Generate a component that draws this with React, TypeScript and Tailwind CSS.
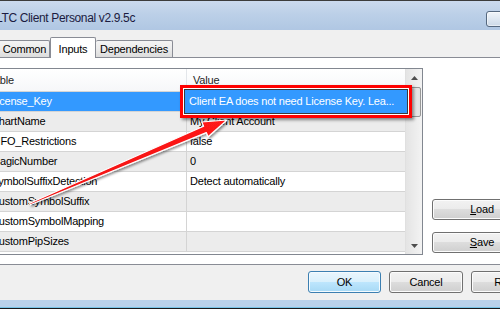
import React from "react";

type Row = { name: string; value: string; selected?: boolean };

const rows: Row[] = [
  { name: "License_Key", value: "", selected: true },
  { name: "ChartName", value: "My Client Account" },
  { name: "FIFO_Restrictions", value: "false" },
  { name: "MagicNumber", value: "0" },
  { name: "SymbolSuffixDetection", value: "Detect automatically" },
  { name: "CustomSymbolSuffix", value: "" },
  { name: "CustomSymbolMapping", value: "" },
  { name: "CustomPipSizes", value: "" },
];

function VistaButton({
  children,
  className = "",
  focused = false,
}: {
  children: React.ReactNode;
  className?: string;
  focused?: boolean;
}) {
  return (
    <div
      className={
        "flex items-center justify-center rounded-[3px] border " +
        (focused
          ? "border-[#3c7fb1] bg-[linear-gradient(to_bottom,#eaf6fd_0%,#d9f0fc_50%,#bee6fd_50%,#a7d9f5_100%)] shadow-[inset_0_0_0_1px_#f4fbff]"
          : "border-[#707070] bg-[linear-gradient(to_bottom,#f2f2f2_0%,#ebebeb_50%,#dddddd_50%,#cfcfcf_100%)] shadow-[inset_0_0_0_1px_#fcfcfc]") +
        " " +
        className
      }
    >
      {children}
    </div>
  );
}

export default function App() {
  return (
    <div className="relative w-[500px] h-[320px] overflow-hidden bg-white font-['Liberation_Sans',Arial,sans-serif] text-[11px] tracking-[-0.2px] text-black">
      {/* Title bar */}
      <div className="h-[30px] flex items-start pt-[10px] border-t border-[#3c3c3c] bg-[linear-gradient(to_bottom,#cbdaee_0%,#bcd0e8_45%,#b0c7e3_100%)]">
        <span className="ml-[-4px] mt-[1px] leading-none text-[12px] tracking-[-0.35px] text-[#1b1b40]">
          LTC Client Personal v2.9.5c
        </span>
        <div className="ml-auto mr-[-14px] w-[28px] h-[16px] rounded-[3px] border border-[#55687f] bg-[linear-gradient(to_bottom,#f1f5fa_0%,#dfe8f2_50%,#cbd8e7_100%)] shadow-[inset_0_0_0_1px_#ffffff80]" />
      </div>

      {/* Dialog body */}
      <div className="h-[270px] bg-[#f0f0f0] flex flex-col">
        {/* Tabs */}
        <div className="h-[27px] pt-[7px] flex items-end ml-[-2px] relative z-10">
          <div className="h-[17px] w-[52px] border border-b-0 border-[#898c95] rounded-t-[2px] bg-[linear-gradient(to_bottom,#f4f4f4_0%,#ebebeb_50%,#dcdcdc_100%)] flex items-center justify-center pl-[1px]">
            Common
          </div>
          <div className="h-[21px] w-[46px] mb-[-1px] bg-white border border-b-0 border-[#898c95] rounded-t-[2px] flex items-start justify-center pt-[3px]">
            Inputs
          </div>
          <div className="h-[17px] w-[77px] border border-b-0 border-l-0 border-[#898c95] rounded-t-[2px] bg-[linear-gradient(to_bottom,#f4f4f4_0%,#ebebeb_50%,#dcdcdc_100%)] flex items-center justify-center">
            Dependencies
          </div>
        </div>

        {/* Tab panel */}
        <div className="h-[208px] ml-[-40px] w-[640px] shrink-0 border border-[#898c95] bg-white flex items-start pt-[10px] pl-[8px]">
          {/* List */}
          <div className="w-[454px] h-[187px] border border-[#828790] flex bg-white">
            <div className="flex-1 flex flex-col">
              {/* header */}
              <div className="h-[23px] flex border-b border-[#d5d5d5] bg-[linear-gradient(to_bottom,#ffffff,#f6f7f9)] text-[#1f1f1f]">
                <div className="w-[217px] border-r border-[#e3e6ea] pl-[6px] flex items-center">Variable</div>
                <div className="flex-1 pl-[6px] flex items-center">Value</div>
              </div>
              {rows.map((r, i) => (
                <div
                  key={r.name}
                  className={
                    "h-[20px] flex border-b border-[#d4d4d4] " +
                    (r.selected ? "bg-[#3399ff] text-white" : i % 2 === 1 ? "bg-[#ececec]" : "bg-white")
                  }
                >
                  <div className="w-[217px] border-r border-[#d4d4d4] pl-[21px] flex items-center whitespace-nowrap">
                    {r.name}
                  </div>
                  <div className="flex-1 pl-[3px] flex items-center whitespace-nowrap">{r.value}</div>
                </div>
              ))}
            </div>
            {/* scrollbar */}
            <div className="w-[17px] flex flex-col bg-[linear-gradient(to_right,#e4e4e4,#f3f3f3)] border-l border-[#e0e0e0]">
              <div className="h-[17px] flex items-center justify-center">
                <svg width="7" height="4" viewBox="0 0 7 4">
                  <path d="M0 4 L3.5 0 L7 4 Z" fill="#4d4d4d" />
                </svg>
              </div>
              <div className="mt-[1px] h-[30px] mx-[1px] rounded-[2px] border border-[#979797] bg-[linear-gradient(to_right,#f3f3f3,#e2e2e2)]" />
              <div className="flex-1" />
              <div className="h-[17px] flex items-center justify-center">
                <svg width="7" height="4" viewBox="0 0 7 4">
                  <path d="M0 0 L7 0 L3.5 4 Z" fill="#4d4d4d" />
                </svg>
              </div>
            </div>
          </div>

          {/* Load / Save */}
          <div className="ml-[9px] mt-[131px] flex flex-col gap-[12px]">
            <VistaButton className="w-[100px] h-[21px]">
              <span>
                <span className="underline">L</span>oad
              </span>
            </VistaButton>
            <VistaButton className="w-[100px] h-[21px]">
              <span>
                <span className="underline">S</span>ave
              </span>
            </VistaButton>
          </div>
        </div>

        {/* Bottom buttons */}
        <div className="flex-1 flex items-start pt-[6px] pl-[308px] gap-[8px]">
          <VistaButton focused className="w-[73px] h-[22px] shrink-0">OK</VistaButton>
          <VistaButton className="w-[74px] h-[22px] shrink-0">Cancel</VistaButton>
          <VistaButton className="w-[74px] h-[22px] shrink-0">Reset</VistaButton>
        </div>
      </div>

      {/* Window frame bottom */}
      <div className="h-[7px] bg-[#bad2ea]" />
      <div className="h-[1px] bg-[#78c4e6]" />
      <div className="h-[1px] bg-[#1a1a1a]" />

      {/* Highlight box over the License_Key value */}
      <div className="absolute left-[180px] top-[85px] w-[232px] h-[33px] border-[3px] border-[#ff0000] shadow-[2px_2px_3px_rgba(0,0,0,0.45)]">
        <div className="w-full h-full border border-white">
          <div className="w-full h-full border border-[#3a3a3a] bg-[#3399ff] text-white flex items-center pl-[4px] whitespace-nowrap">
            Client EA does not need License Key. Lea...
          </div>
        </div>
      </div>

      {/* Red arrow */}
      <svg className="absolute left-0 top-0 pointer-events-none" width="500" height="320" viewBox="0 0 500 320">
        <defs>
          <linearGradient id="arrowFill" x1="0" y1="1" x2="1" y2="0">
            <stop offset="0" stopColor="#f01010" />
            <stop offset="1" stopColor="#ff1a1a" />
          </linearGradient>
          <filter id="arrowShadow" x="-10%" y="-10%" width="120%" height="130%">
            <feDropShadow dx="1.5" dy="1.5" stdDeviation="1" floodColor="#000" floodOpacity="0.45" />
          </filter>
        </defs>
        <polygon
          points="29.7,203.3 203.6,126.2 201.8,122.0 227,120 208.1,136.8 206.3,132.6 30.3,204.7"
          fill="url(#arrowFill)"
          stroke="#ffffff"
          strokeWidth="1.2"
          strokeLinejoin="round"
          filter="url(#arrowShadow)"
        />
      </svg>
    </div>
  );
}
